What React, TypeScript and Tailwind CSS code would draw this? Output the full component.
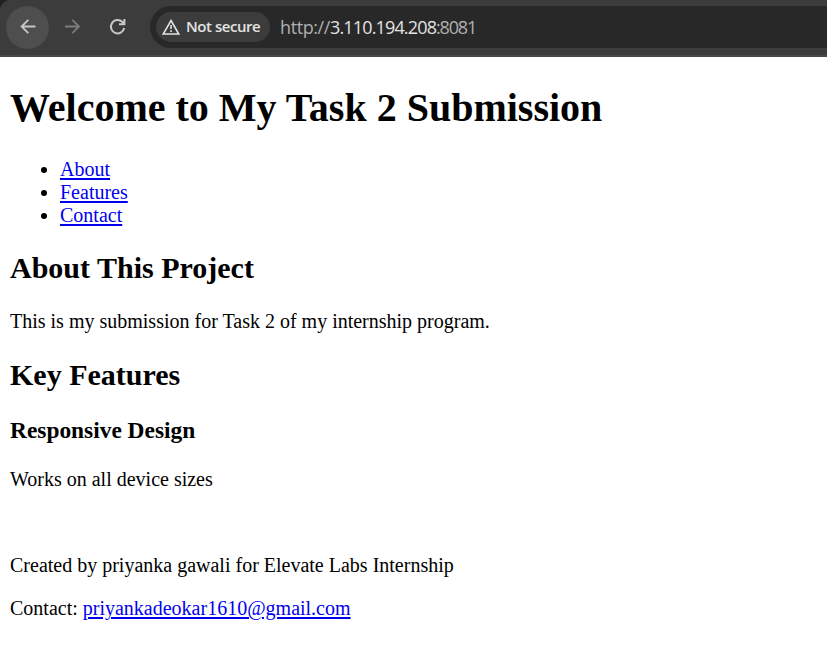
export default function App() {
  const link = "text-[#0000ee] underline decoration-2 underline-offset-2";
  return (
    <div className="h-[659px] w-[827px] overflow-hidden bg-white font-['Liberation_Serif',serif] text-[20px] leading-[23px] text-black">
      <header className="flex h-[57px] items-start border-b-2 border-[#484848] bg-[radial-gradient(circle_at_12px_12px,#3c3c3c_12px,#202020_13px)] bg-[length:12px_12px] bg-no-repeat bg-[#3c3c3c]">
        <div className="ml-[6px] mt-[6px] flex size-[43px] justify-center rounded-full bg-[#4e4e4e] pt-[10px]">
          <svg width="20" height="20" viewBox="0 0 20 20" fill="none" stroke="#c7c7c7" strokeWidth="1.8"><path d="M17.5 10.5H3.5M10.3 3.8L3.6 10.5L10.3 17.2" /></svg>
        </div>
        <svg className="ml-[13px] mt-[17px]" width="20" height="20" viewBox="0 0 20 20" fill="none" stroke="#7c7c7c" strokeWidth="1.8"><path d="M3 9.5H17M10.3 2.8L17 9.5L10.3 16.2" /></svg>
        <svg className="ml-[25px] mt-[17px]" width="20" height="20" viewBox="0 0 20 20" fill="none" stroke="#c7c7c7" strokeWidth="2"><path d="M17.2 11A6.7 6.7 0 1 1 15.2 4.8L17.4 7M17.4 2V7.3H12" /></svg>
        <div className="ml-[23px] mt-[6px] flex h-[42px] flex-1 items-center rounded-l-full bg-[#282828] pl-[6px] font-['Open_Sans',sans-serif]">
          <div className="flex h-[30px] w-[114px] items-center rounded-full bg-[#3c3c3c] pl-[6px]">
            <svg width="18" height="18" viewBox="0 0 18 18" fill="none" stroke="#e3e3e3" strokeWidth="1.6"><path d="M9 2.5L16.8 16H1.2Z M9 7V11 M9 12.3V14" /></svg>
            <span className="mb-[2px] ml-[6px] w-[74px] whitespace-nowrap text-[15px] font-semibold tracking-[-0.45px] text-[#e3e3e3]">Not secure</span>
          </div>
          <span className="ml-[10px] whitespace-nowrap text-[18px] tracking-[-1.2px] text-[#b0b0b0]"><span className="tracking-[-0.4px]">http://</span><span className="tracking-[-0.85px] text-[#e3e3e3]">3.110.194.208</span>:8081</span>
        </div>
      </header>
      <main className="px-[10px] pt-[28px]">
        <h1 className="text-[40px] font-bold leading-[46px]">Welcome to My Task 2 Submission</h1>
        <ul className="mt-[27px] list-disc pl-[50px]">
          <li><a className={link}>About</a></li><li><a className={link}>Features</a></li><li><a className={link}>Contact</a></li>
        </ul>
        <h2 className="mt-[24px] text-[30px] font-bold leading-[34px]">About This Project</h2>
        <p className="mt-[25px]">This is my submission for Task 2 of my internship program.</p>
        <h2 className="mt-[25px] text-[30px] font-bold leading-[34px]">Key Features</h2>
        <h3 className="mt-[25px] text-[23.4px] font-bold leading-[27px]">Responsive Design</h3>
        <p className="mt-[24px]">Works on all device sizes</p>
        <p className="mt-[63px]">Created by priyanka gawali for Elevate Labs Internship</p>
        <p className="mt-[20px]">Contact: <a className={link}>priyankadeokar1610@gmail.com</a></p>
      </main>
    </div>
  );
}
